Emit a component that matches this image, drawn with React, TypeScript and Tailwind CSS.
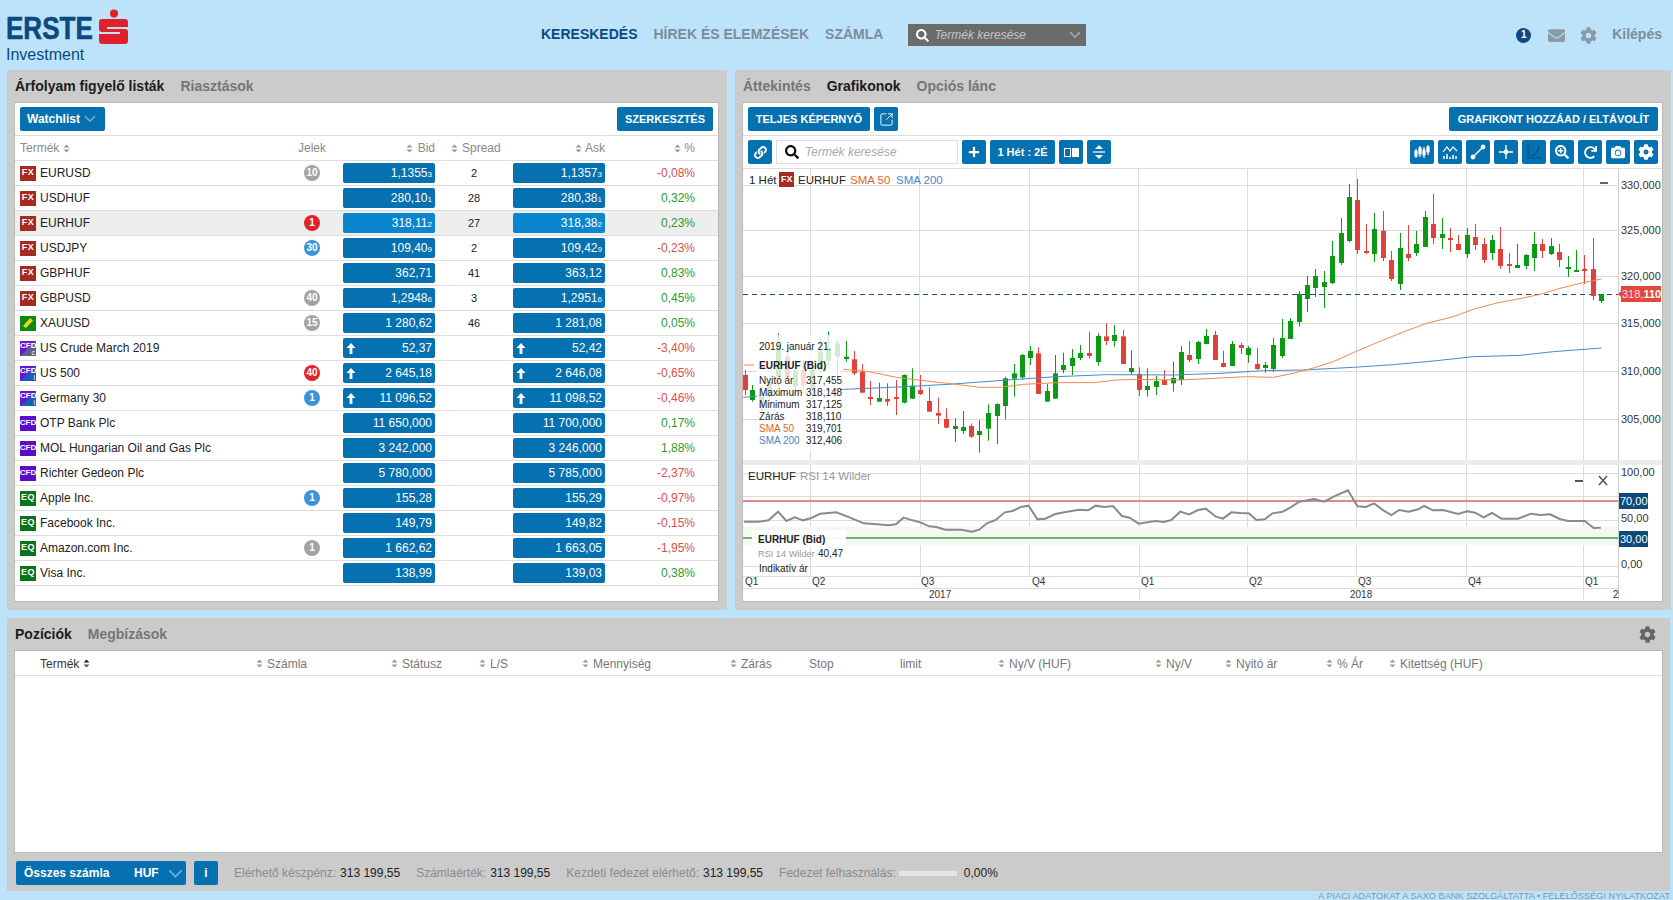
import { SquareArrowOutUpRight } from 'lucide-react'
import { FaCamera, FaCog, FaEnvelope, FaLink, FaPlus, FaRedo, FaSearch, FaSearchPlus } from 'react-icons/fa'

type Row = {
  type: 'fx' | 'gold' | 'cfdc' | 'cfdi' | 'cfd' | 'eq'
  name: string
  signal?: [string, string]
  bid: string
  bidSub?: string
  spread?: string
  ask: string
  askSub?: string
  pct: string
  arrow?: boolean
  active?: boolean
}

const GRAY = 'bg-[#a3a3a3]'
const RED = 'bg-[#e0242a]'
const BLUE = 'bg-[#3b94d9]'

const rows: Row[] = [
  { type: 'fx', name: 'EURUSD', signal: ['10', GRAY], bid: '1,1355', bidSub: '3', spread: '2', ask: '1,1357', askSub: '3', pct: '-0,08%' },
  { type: 'fx', name: 'USDHUF', bid: '280,10', bidSub: '1', spread: '28', ask: '280,38', askSub: '1', pct: '0,32%' },
  { type: 'fx', name: 'EURHUF', signal: ['1', RED], bid: '318,11', bidSub: '2', spread: '27', ask: '318,38', askSub: '2', pct: '0,23%', active: true },
  { type: 'fx', name: 'USDJPY', signal: ['30', BLUE], bid: '109,40', bidSub: '9', spread: '2', ask: '109,42', askSub: '9', pct: '-0,23%' },
  { type: 'fx', name: 'GBPHUF', bid: '362,71', spread: '41', ask: '363,12', pct: '0,83%' },
  { type: 'fx', name: 'GBPUSD', signal: ['40', GRAY], bid: '1,2948', bidSub: '6', spread: '3', ask: '1,2951', askSub: '6', pct: '0,45%' },
  { type: 'gold', name: 'XAUUSD', signal: ['15', GRAY], bid: '1 280,62', spread: '46', ask: '1 281,08', pct: '0,05%' },
  { type: 'cfdc', name: 'US Crude March 2019', bid: '52,37', ask: '52,42', pct: '-3,40%', arrow: true },
  { type: 'cfdi', name: 'US 500', signal: ['40', RED], bid: '2 645,18', ask: '2 646,08', pct: '-0,65%', arrow: true },
  { type: 'cfdi', name: 'Germany 30', signal: ['1', BLUE], bid: '11 096,52', ask: '11 098,52', pct: '-0,46%', arrow: true },
  { type: 'cfd', name: 'OTP Bank Plc', bid: '11 650,000', ask: '11 700,000', pct: '0,17%' },
  { type: 'cfd', name: 'MOL Hungarian Oil and Gas Plc', bid: '3 242,000', ask: '3 246,000', pct: '1,88%' },
  { type: 'cfd', name: 'Richter Gedeon Plc', bid: '5 780,000', ask: '5 785,000', pct: '-2,37%' },
  { type: 'eq', name: 'Apple Inc.', signal: ['1', BLUE], bid: '155,28', ask: '155,29', pct: '-0,97%' },
  { type: 'eq', name: 'Facebook Inc.', bid: '149,79', ask: '149,82', pct: '-0,15%' },
  { type: 'eq', name: 'Amazon.com Inc.', signal: ['1', GRAY], bid: '1 662,62', ask: '1 663,05', pct: '-1,95%' },
  { type: 'eq', name: 'Visa Inc.', bid: '138,99', ask: '139,03', pct: '0,38%' },
]

// x, high, low, body top, body bottom, 1 = green
// measured from the screenshot crops, converted to page coords below
const left: number[][] = [
  [14, 630, 705, 645, 690, 0], [36, 675, 725, 690, 720, 1], [317, 543, 605, 590, 597, 1], [341, 573, 645, 598, 640, 0],
  [367, 612, 700, 635, 698, 0], [391, 663, 735, 711, 717, 0], [416, 668, 725, 714, 725, 1], [442, 670, 738, 717, 725, 0],
  [467, 660, 765, 711, 717, 0], [493, 643, 730, 645, 728, 1], [517, 625, 717, 677, 716, 1], [541, 645, 705, 690, 702, 0],
  [568, 682, 755, 723, 755, 0], [593, 713, 792, 759, 767, 0], [619, 745, 805, 777, 803, 0], [644, 775, 846, 798, 807, 1],
  [670, 753, 822, 801, 813, 1], [694, 790, 834, 798, 830, 0], [718, 780, 878, 813, 825, 1], [745, 733, 842, 759, 806, 1],
  [770, 730, 852, 732, 768, 1], [796, 650, 778, 655, 738, 1], [821, 612, 710, 640, 656, 1], [845, 582, 660, 585, 652, 1],
  [871, 558, 615, 573, 594, 1], [895, 562, 702, 580, 702, 0], [922, 672, 725, 693, 725, 1], [946, 585, 716, 640, 716, 1],
  [970, 578, 640, 615, 630, 1], [997, 567, 645, 594, 618, 1], [1021, 555, 600, 579, 594, 1], [1048, 515, 595, 579, 588, 0],
  [1073, 520, 617, 528, 606, 1], [1097, 490, 555, 529, 543, 0], [1123, 495, 560, 525, 543, 1], [1148, 510, 612, 529, 612, 0],
  [1174, 572, 642, 624, 636, 1], [1198, 622, 708, 642, 690, 0], [1222, 625, 710, 678, 690, 1], [1249, 648, 705, 663, 681, 1],
  [1273, 630, 675, 660, 675, 0], [1300, 605, 695, 654, 670, 1], [1324, 558, 675, 576, 660, 1], [1348, 543, 606, 585, 600, 0],
  [1375, 543, 612, 546, 597, 1], [1399, 507, 552, 528, 552, 1], [1426, 513, 600, 525, 600, 0],
]

const faded: number[][] = [
  [62, 680, 760, 700, 745, 1], [88, 650, 740, 665, 710, 1], [114, 520, 680, 555, 650, 1], [140, 555, 660, 590, 650, 0],
  [165, 600, 700, 632, 680, 1], [190, 600, 690, 630, 675, 0], [215, 600, 720, 630, 685, 1], [240, 530, 640, 575, 630, 1],
  [265, 515, 620, 568, 602, 1], [290, 540, 655, 550, 590, 1],
]

const right: number[][] = [
  [10, 572, 622, 609, 621, 0], [35, 543, 618, 552, 618, 1], [62, 548, 582, 555, 564, 0], [85, 558, 608, 564, 585, 1],
  [112, 564, 630, 612, 627, 0], [136, 606, 638, 615, 624, 1], [160, 534, 636, 555, 627, 1], [187, 477, 594, 534, 588, 1],
  [211, 474, 537, 483, 537, 1], [238, 393, 500, 402, 486, 1], [262, 348, 456, 375, 417, 1], [286, 327, 411, 348, 384, 1],
  [313, 333, 444, 366, 381, 1], [337, 243, 372, 288, 369, 1], [364, 174, 315, 219, 309, 1], [388, 72, 247, 111, 243, 1],
  [412, 57, 282, 120, 270, 0], [439, 192, 282, 273, 279, 0], [463, 159, 306, 207, 282, 1], [490, 153, 303, 212, 294, 0],
  [514, 273, 363, 300, 357, 0], [541, 219, 390, 264, 372, 1], [565, 195, 303, 282, 294, 0], [589, 213, 288, 252, 279, 1],
  [616, 153, 261, 171, 261, 1], [640, 102, 252, 192, 234, 0], [667, 174, 267, 222, 234, 1], [691, 204, 276, 234, 240, 0],
  [715, 225, 270, 252, 270, 0], [742, 204, 294, 225, 282, 1], [766, 192, 270, 231, 255, 0], [793, 234, 309, 252, 300, 0],
  [817, 225, 300, 240, 279, 1], [841, 201, 327, 267, 318, 0], [868, 279, 339, 312, 318, 0], [892, 252, 324, 315, 324, 1],
  [919, 282, 327, 285, 318, 1], [943, 216, 333, 252, 294, 1], [967, 237, 294, 252, 273, 0], [994, 234, 285, 258, 282, 1],
  [1018, 252, 321, 276, 300, 0], [1045, 288, 351, 321, 327, 1], [1069, 270, 336, 330, 333, 1], [1093, 285, 372, 327, 330, 0],
  [1120, 234, 420, 327, 408, 0], [1144, 402, 429, 402, 423, 1],
]

const sma50 = [
  [310, 628], [380, 634], [470, 652], [560, 663], [640, 672], [720, 682], [780, 682], [850, 673], [950, 668], [1060, 668],
  [1130, 660], [1200, 658], [1320, 660], [1440, 654],
].map(([x, y]) => `${740 + x / 3},${160 + y / 3}`)
  .concat(
    [
      [80, 650], [160, 652], [220, 640], [280, 624], [340, 605], [400, 578], [480, 544], [560, 512], [620, 490], [700, 470],
      [760, 448], [830, 429], [900, 416], [960, 403], [1020, 385], [1080, 370], [1144, 357],
    ].map(([x, y]) => `${1220 + x / 3},${160 + y / 3}`),
  )
  .join(' ')

const sma200 = [
  [10, 712], [310, 688], [500, 680], [640, 672], [800, 660], [950, 650], [1100, 644], [1300, 645], [1440, 640],
].map(([x, y]) => `${740 + x / 3},${160 + y / 3}`)
  .concat(
    [
      [130, 632], [250, 630], [400, 622], [520, 614], [650, 602], [760, 590], [900, 586], [1000, 575], [1144, 564],
    ].map(([x, y]) => `${1220 + x / 3},${160 + y / 3}`),
  )
  .join(' ')

const rsi = [
  [7, 185], [30, 185], [48, 181], [64, 155], [78, 183], [92, 172], [106, 181], [120, 174], [135, 161], [162, 157], [185, 173],
  [208, 190], [230, 193], [250, 196], [262, 193], [275, 173], [290, 181], [303, 187], [318, 199], [330, 201], [345, 209],
  [372, 209], [390, 215], [402, 209], [415, 190], [430, 180], [445, 157], [458, 153], [472, 141], [485, 137], [500, 178],
  [513, 176], [530, 162], [550, 155], [570, 149], [585, 151], [598, 137], [612, 141], [627, 138], [642, 168], [655, 173],
  [670, 191], [685, 187], [698, 183], [712, 186], [725, 180], [740, 155], [755, 163], [770, 150], [783, 146], [800, 170],
  [812, 176], [826, 157], [840, 159], [855, 160], [868, 180], [882, 178], [895, 160], [912, 155], [925, 143], [940, 125],
  [965, 117], [982, 125], [998, 110], [1022, 91], [1038, 139], [1052, 141], [1066, 130], [1082, 152], [1095, 165], [1108, 150],
  [1124, 155], [1140, 148], [1150, 138], [1165, 151], [1182, 150], [1207, 162], [1222, 154], [1236, 158], [1250, 172],
  [1264, 159], [1280, 176], [1308, 176], [1330, 161], [1345, 165], [1362, 163], [1378, 177], [1392, 183], [1420, 183],
  [1435, 204], [1447, 203],
].map(([x, y]) => `${740 + x / 1.681},${460 + y / 3}`).join(' ')

const posColumns = [
  { label: 'Termék', w: 'w-[216px]', first: true },
  { label: 'Számla', w: 'w-[135px]', sort: true },
  { label: 'Státusz', w: 'w-[88px]', sort: true },
  { label: 'L/S', w: 'w-[103px]', sort: true },
  { label: 'Mennyiség', w: 'w-[148px]', sort: true },
  { label: 'Zárás', w: 'w-[79px]', sort: true },
  { label: 'Stop', w: 'w-[91px]' },
  { label: 'limit', w: 'w-[98px]' },
  { label: 'Ny/V (HUF)', w: 'w-[157px]', sort: true },
  { label: 'Ny/V', w: 'w-[70px]', sort: true },
  { label: 'Nyitó ár', w: 'w-[101px]', sort: true },
  { label: '% Ár', w: 'w-[63px]', sort: true },
  { label: 'Kitettség (HUF)', w: 'w-[120px]', sort: true },
]

const gridCols = 'grid grid-cols-[280px_24px_19px_92px_78px_92px_90px] pl-[5px] items-center'

function Sort({ dark }: { dark?: boolean }) {
  return (
    <svg width="7" height="9" viewBox="0 0 7 9" className="shrink-0">
      <path d="M3.5 0.5 L6.5 3.5 H0.5 Z" fill={dark ? '#222' : '#999'} />
      <path d="M3.5 8.5 L6.5 5.5 H0.5 Z" fill={dark ? '#555' : '#999'} />
    </svg>
  )
}

function Chev({ w, className = '' }: { w: number; className?: string }) {
  return (
    <svg width={w} height={w * 0.6} viewBox="0 0 12 7" fill="none" stroke="currentColor" strokeWidth="1.6" className={`shrink-0 ${className}`}>
      <path d="M1 1 L6 6 L11 1" />
    </svg>
  )
}

function Badge({ type }: { type: Row['type'] }) {
  if (type === 'gold') {
    return (
      <span className="w-4 h-[15px] bg-[#0b8a12] shrink-0 flex items-center justify-center">
        <svg width="12" height="12" viewBox="0 0 12 12">
          <path d="M1 9 L8 1 L11 3.5 L4 11 Z" fill="#f2d21a" />
        </svg>
      </span>
    )
  }
  if (type === 'fx') {
    return (
      <span className="w-4 h-[15px] bg-[#a52a22] shrink-0 text-white font-bold text-[9px] tracking-[0.5px] flex items-center justify-center leading-none pb-px">
        FX
      </span>
    )
  }
  if (type === 'eq') {
    return (
      <span className="w-4 h-[15px] bg-[#0a741a] shrink-0 text-white font-bold text-[9px] tracking-[0.5px] flex items-center justify-center leading-none pb-px">
        EQ
      </span>
    )
  }
  if (type === 'cfd') {
    return (
      <span className="w-4 h-[15px] bg-[#5c0bcb] shrink-0 text-white font-bold text-[8px] flex items-center justify-center leading-none pb-px">
        CFD
      </span>
    )
  }
  const bg =
    type === 'cfdc'
      ? 'bg-[linear-gradient(135deg,#6a14d2_50%,#5a6488_50%)]'
      : 'bg-[linear-gradient(135deg,#6a14d2_50%,#1a5cb8_50%)]'
  return (
    <span className={`relative w-4 h-[15px] ${bg} shrink-0 text-white font-bold text-[8px] leading-none pt-px text-center`}>
      CFD
      <span className="absolute right-px bottom-0 text-[7px] font-normal">{type === 'cfdc' ? 'c' : 'i'}</span>
    </span>
  )
}

function Price({ value, sub, arrow, active }: { value: string; sub?: string; arrow?: boolean; active?: boolean }) {
  return (
    <div
      className={`${active ? 'bg-[#0a86cf]' : 'bg-[#0671b0]'} h-5 rounded-[2px] flex items-center justify-between pl-[3px] pr-[3px] text-white text-xs`}
    >
      {arrow ? (
        <svg width="10" height="11" viewBox="0 0 10 11" fill="#fff">
          <path d="M5 0 L9.5 5 H6.4 V11 H3.6 V5 H0.5 Z" />
        </svg>
      ) : (
        <span />
      )}
      <span>
        {value}
        {sub && <span className="text-[8px]">{sub}</span>}
      </span>
    </div>
  )
}

function Btn({ children, className = '' }: { children: React.ReactNode; className?: string }) {
  return (
    <button
      className={`h-6 bg-[#0671b0] rounded-[2px] text-white font-bold flex items-center justify-center shrink-0 ${className}`}
    >
      {children}
    </button>
  )
}

function IconBtn({ children }: { children: React.ReactNode }) {
  return <Btn className="w-6 text-[14px]">{children}</Btn>
}

function Tab({ children, active }: { children: React.ReactNode; active?: boolean }) {
  return <span className={`text-sm font-bold ${active ? 'text-[#1c1c1c]' : 'text-[#767676]'}`}>{children}</span>
}

function CandleSet({ data, ox, opacity = 1 }: { data: number[][]; ox: number; opacity?: number }) {
  return (
    <g opacity={opacity}>
      {data.map(([x, h, l, t, b, g]) => {
        const cx = Math.round(ox + x / 3) + 0.5
        const color = g ? '#0a9a14' : '#e2403a'
        return (
          <g key={x}>
            <line x1={cx} x2={cx} y1={160 + h / 3} y2={160 + l / 3} stroke={color} />
            <rect x={cx - 2.5} y={160 + t / 3} width={5} height={Math.max((b - t) / 3, 2)} fill={color} />
          </g>
        )
      })}
    </g>
  )
}

function Chart() {
  const vLines = [810, 919, 1029, 1138, 1247, 1356, 1466, 1583]
  const grid = '#dcdcdc'
  const axisLabels: [string, number][] = [
    ['330,000', 185],
    ['325,000', 230],
    ['320,000', 276],
    ['315,000', 323],
    ['310,000', 371],
    ['305,000', 419],
  ]
  const legendRows: [string, string, string][] = [
    ['Nyitó ár', '317,455', '#222'],
    ['Maximum', '318,148', '#222'],
    ['Minimum', '317,125', '#222'],
    ['Zárás', '318,110', '#222'],
    ['SMA 50', '319,701', '#e0662a'],
    ['SMA 200', '312,406', '#4a86c5'],
  ]
  const quarters: [string, number][] = [
    ['Q1', 745], ['Q2', 812], ['Q3', 921], ['Q4', 1032], ['Q1', 1141], ['Q2', 1249], ['Q3', 1358], ['Q4', 1468], ['Q1', 1585],
  ]

  return (
    <svg width="919" height="432" viewBox="743 169 919 432" className="block">
      {/* grid of the price pane */}
      {vLines.map((x) => (
        <line key={x} x1={x + 0.5} x2={x + 0.5} y1={169} y2={460} stroke={grid} />
      ))}
      <line x1={1618.5} x2={1618.5} y1={169} y2={600} stroke="#cfcfcf" />
      {axisLabels.map(([label, y]) => (
        <g key={label}>
          <line x1={743} x2={1618} y1={y + 0.5} y2={y + 0.5} stroke={grid} />
          <text x={1621} y={y + 4} fontSize={11} fill="#333">
            {label}
          </text>
        </g>
      ))}
      <line x1={743} x2={1618} y1={294.5} y2={294.5} stroke="#1d4f75" strokeDasharray="5 4" />

      <CandleSet data={left} ox={740} />
      <CandleSet data={right} ox={1220} />
      <CandleSet data={faded} ox={740} />
      <polyline points={sma200} fill="none" stroke="#4a8ac4" strokeWidth={1} />
      <polyline points={sma50} fill="none" stroke="#ee8a4c" strokeWidth={1} />
      <line x1={744} x2={754} y1={365} y2={365} stroke="#ee8a4c" />

      {/* legend box on top of the candles */}
      <rect x={757} y={335} width={83} height={115} fill="#fff" opacity={0.8} />
      <text x={759} y={350} fontSize={10} fill="#222">
        2019. január 21.
      </text>
      <text x={759} y={369} fontSize={10} fontWeight={700} fill="#222">
        EURHUF (Bid)
      </text>
      {legendRows.map(([k, v, color], i) => (
        <g key={k}>
          <text x={759} y={384 + i * 12} fontSize={10} fill={color}>
            {k}
          </text>
          <text x={806} y={384 + i * 12} fontSize={10} fill="#222">
            {v}
          </text>
        </g>
      ))}

      <text x={749} y={184} fontSize={11.5} fill="#222">
        1 Hét
      </text>
      <rect x={779} y={172} width={15} height={15} fill="#a52a22" />
      <text x={781} y={182} fontSize={9} fontWeight={700} fill="#fff">
        FX
      </text>
      <text x={798} y={184} fontSize={11.5} fill="#222">
        EURHUF
      </text>
      <text x={850} y={184} fontSize={11.5} fill="#e0662a">
        SMA 50
      </text>
      <text x={896} y={184} fontSize={11.5} fill="#4a86c5">
        SMA 200
      </text>
      <rect x={1600} y={182} width={8} height={2} fill="#666" />

      {/* current price tag */}
      <path d="M1618 294 L1621 291 V286 H1661 V302 H1621 V297 Z" fill="#e2463c" />
      <text x={1622} y={298} fontSize={11} fill="#fde">
        318,
        <tspan fontWeight={700} fill="#fff">
          110
        </tspan>
      </text>

      {/* separator between the panes */}
      <rect x={743} y={460} width={919} height={5} fill="#ececec" />

      {/* RSI pane */}
      {[810, 920, 1029, 1139, 1247, 1356, 1466, 1583].map((x) => (
        <line key={x} x1={x + 0.5} x2={x + 0.5} y1={465} y2={576} stroke={grid} />
      ))}
      {[473, 496, 520, 566].map((y) => (
        <line key={y} x1={743} x2={1618} y1={y + 0.5} y2={y + 0.5} stroke={grid} />
      ))}
      <rect x={743} y={527} width={875} height={18} fill="#f2f9f2" />
      <line x1={743} x2={1618} y1={501} y2={501} stroke="#d9655e" strokeWidth={1.5} />
      <line x1={743} x2={1618} y1={538} y2={538} stroke="#459c45" strokeWidth={1.5} />
      <polyline points={rsi} fill="none" stroke="#8a8a8a" strokeWidth={2} />

      <text x={748} y={480} fontSize={11.5} fill="#222">
        EURHUF
      </text>
      <text x={800} y={480} fontSize={11.5} fill="#999">
        RSI 14 Wilder
      </text>
      <rect x={1575} y={480} width={8} height={2} fill="#555" />
      <path d="M1599 476 L1607 485 M1607 476 L1599 485" stroke="#555" strokeWidth={1.5} />

      <rect x={752} y={530} width={94} height={17} fill="#fff" opacity={0.92} />
      <text x={758} y={543} fontSize={10} fontWeight={700} fill="#222">
        EURHUF (Bid)
      </text>
      <text x={758} y={557} fontSize={9.2} fill="#999">
        RSI 14 Wilder
      </text>
      <text x={818} y={557} fontSize={10} fill="#222">
        40,47
      </text>
      <text x={759} y={572} fontSize={10} fill="#222">
        Indikatív ár
      </text>

      <text x={1621} y={476} fontSize={11} fill="#333">
        100,00
      </text>
      <rect x={1619} y={493} width={29} height={16} fill="#0d4a7a" />
      <text x={1620} y={505} fontSize={11} fill="#fff">
        70,00
      </text>
      <text x={1621} y={522} fontSize={11} fill="#333">
        50,00
      </text>
      <rect x={1619} y={531} width={29} height={16} fill="#0d4a7a" />
      <text x={1620} y={543} fontSize={11} fill="#fff">
        30,00
      </text>
      <text x={1621} y={568} fontSize={11} fill="#333">
        0,00
      </text>

      {/* time axis */}
      <line x1={743} x2={1618} y1={576.5} y2={576.5} stroke={grid} />
      <line x1={743} x2={1618} y1={588.5} y2={588.5} stroke={grid} />
      {quarters.map(([q, x], i) => (
        <text key={i} x={x} y={585} fontSize={10} fill="#333">
          {q}
        </text>
      ))}
      <line x1={1139.5} x2={1139.5} y1={589} y2={600} stroke={grid} />
      <line x1={1583.5} x2={1583.5} y1={576} y2={600} stroke={grid} />
      <text x={929} y={598} fontSize={10} fill="#333">
        2017
      </text>
      <text x={1350} y={598} fontSize={10} fill="#333">
        2018
      </text>
      <text x={1613} y={598} fontSize={10} fill="#333">
        2
      </text>
    </svg>
  )
}

function ToolIcon({ kind, dim }: { kind: string; dim?: boolean }) {
  const stroke = dim ? '#0b4f80' : '#fff'
  return (
    <svg width="16" height="16" viewBox="0 0 16 16" fill="none" stroke={stroke} strokeWidth="1.2">
      {kind === 'candles' && (
        <>
          <path d="M2 5v9M6 2v11M10 3v11M14 1v10" />
          <path d="M1 7h2v5H1zM5 4h2v6H5zM9 6h2v5H9zM13 3h2v5h-2z" fill="#fff" />
        </>
      )}
      {kind === 'bars' && (
        <>
          <path d="M1 8 L5 3 L8 7 L11 3 L15 7" strokeWidth="1.2" />
          <path d="M2 15v-3M5 15v-5M8 15v-2M11 15v-4M14 15v-3" strokeWidth="1.5" />
        </>
      )}
      {kind === 'line' && (
        <>
          <path d="M3 13 L13 3" strokeWidth="1.4" />
          <circle cx="3" cy="13" r="1.8" fill="#fff" />
          <circle cx="13" cy="3" r="1.8" fill="#fff" />
        </>
      )}
      {kind === 'cross' && (
        <>
          <path d="M8 1v14M1 8h14" strokeWidth="1.3" />
          <circle cx="8" cy="8" r="1.8" fill="#fff" />
        </>
      )}
      {kind === 'axes' && <path d="M2 1v13h13M4 12c5 0 7-3 9-10" />}
    </svg>
  )
}

function Logo() {
  return (
    <div className="w-[541px] shrink-0 pl-[6px] pt-[9px] text-[#0b4a80]">
      <div className="flex items-end h-[35px]">
        <div className="w-[87px] shrink-0 mb-px">
          <span className="inline-block origin-left scale-x-[0.84] text-[31px] font-bold leading-[27px] [-webkit-text-stroke:0.6px_#0b4a80]">
            ERSTE
          </span>
        </div>
        <svg width="29" height="35" viewBox="0 0 29 35" className="ml-[6px] shrink-0">
          <circle cx="15" cy="4.5" r="4" fill="#e2202c" />
          <path
            d="M3 10h23a3 3 0 0 1 3 3v5H8v2h18a3 3 0 0 1 3 3v9a3 3 0 0 1-3 3H3a3 3 0 0 1-3-3v-7h21v-2H3a3 3 0 0 1-3-3v-7a3 3 0 0 1 3-3z"
            fill="#e2202c"
          />
        </svg>
      </div>
      <div className="text-[16px] leading-none mt-[3px]">Investment</div>
    </div>
  )
}

export default function App() {
  return (
    <div className="w-[1673px] h-[900px] overflow-hidden bg-[#bde3fb] font-['Liberation_Sans',Arial,sans-serif] text-xs text-[#222]">
      {/* top bar */}
      <header className="h-[70px] flex items-start">
        <Logo />
        <nav className="flex items-center gap-4 h-[22px] mt-[23px] text-sm font-bold">
          <span className="text-[#0b4a80]">KERESKEDÉS</span>
          <span className="text-[#7b8d9c]">HÍREK ÉS ELEMZÉSEK</span>
          <span className="text-[#7b8d9c]">SZÁMLA</span>
        </nav>
        <div className="ml-[25px] mt-6 w-[178px] h-[22px] bg-[#6b6b6b] flex items-center pl-2 pr-[5px] text-[#c4c4c4]">
          <FaSearch className="text-white text-[13px] shrink-0" />
          <span className="ml-[5px] italic text-xs flex-1">Termék keresése</span>
          <Chev w={12} className="text-[#a8a8a8]" />
        </div>
        <div className="ml-auto mt-6 h-[22px] flex items-center pr-[11px]">
          <span className="w-[15px] h-[15px] rounded-full bg-[#0b4a80] text-white text-[10px] font-bold flex items-center justify-center">
            1
          </span>
          <FaEnvelope className="ml-[17px] text-[#8a9aa6] text-[17px]" />
          <FaCog className="ml-[15px] text-[#8a9aa6] text-[17px]" />
          <span className="ml-[15px] pb-[2px] text-sm font-bold text-[#7b8d9c]">Kilépés</span>
        </div>
      </header>

      <main className="pl-[7px]">
        <div className="flex gap-2">
          {/* watchlists */}
          <section className="w-[720px] h-[540px] bg-[#cbcbcb] pl-2 pr-[9px]">
            <div className="h-[33px] flex items-center gap-4 pb-[2px]">
              <Tab active>Árfolyam figyelő listák</Tab>
              <Tab>Riasztások</Tab>
            </div>
            <div className="h-[498px] bg-white ring-1 ring-[#b8b8b8]">
              <div className="h-[33px] border-b border-[#ddd] px-[5px] pt-1 flex justify-between">
                <Btn className="w-[85px] text-xs gap-[4px] pr-[2px]">
                  Watchlist <Chev w={12} className="text-[#6fa7cc]" />
                </Btn>
                <Btn className="w-24 text-[11px]">SZERKESZTÉS</Btn>
              </div>
              <div className={`${gridCols} h-[25px] border-b border-[#ddd] text-[#8a8a8a]`}>
                <div className="flex items-center gap-[4px]">
                  Termék <Sort />
                </div>
                <div className="flex justify-center">Jelek</div>
                <div />
                <div className="flex items-center justify-end gap-[5px]">
                  <Sort /> Bid
                </div>
                <div className="flex items-center gap-[4px] pl-[16px]">
                  <Sort /> Spread
                </div>
                <div className="flex items-center justify-end gap-[3px]">
                  <Sort /> Ask
                </div>
                <div className="flex items-center justify-end gap-[3px]">
                  <Sort /> %
                </div>
              </div>
              {rows.map((r) => (
                <div key={r.name} className={`${gridCols} h-[25px] border-b border-[#ddd] ${r.active ? 'bg-[#eeeeee]' : ''}`}>
                  <div className="flex items-center gap-1">
                    <Badge type={r.type} />
                    <span>{r.name}</span>
                  </div>
                  <div className="flex justify-center">
                    {r.signal && (
                      <span
                        className={`w-4 h-4 rounded-full ${r.signal[1]} text-white text-[10px] font-bold flex items-center justify-center leading-none`}
                      >
                        {r.signal[0]}
                      </span>
                    )}
                  </div>
                  <div />
                  <Price value={r.bid} sub={r.bidSub} arrow={r.arrow} active={r.active} />
                  <div className="text-center text-[11px]">{r.spread}</div>
                  <Price value={r.ask} sub={r.askSub} arrow={r.arrow} active={r.active} />
                  <div className={`text-right ${r.pct.startsWith('-') ? 'text-[#d9504a]' : 'text-[#2d9a2d]'}`}>{r.pct}</div>
                </div>
              ))}
            </div>
          </section>

          {/* charts */}
          <section className="w-[936px] h-[540px] bg-[#cbcbcb] pl-2 pr-[9px]">
            <div className="h-[33px] flex items-center gap-4 pb-[2px]">
              <Tab>Áttekintés</Tab>
              <Tab active>Grafikonok</Tab>
              <Tab>Opciós lánc</Tab>
            </div>
            <div className="h-[498px] bg-white ring-1 ring-[#b8b8b8]">
              <div className="h-[33px] border-b border-[#ddd] pl-[5px] pr-1 pt-1 flex gap-1">
                <Btn className="w-[122px] text-[11px]">TELJES KÉPERNYŐ</Btn>
                <IconBtn>
                  <SquareArrowOutUpRight size={15} strokeWidth={1.5} />
                </IconBtn>
                <Btn className="ml-auto w-[209px] text-[11px]">GRAFIKONT HOZZÁAD / ELTÁVOLÍT</Btn>
              </div>
              <div className="h-[33px] border-b border-[#ddd] pl-[5px] pr-1 pt-1 flex gap-1">
                <IconBtn>
                  <FaLink className="text-[13px]" />
                </IconBtn>
                <div className="w-[182px] h-6 border border-[#ddd] flex items-center pl-2 shrink-0 text-[#aaa] italic">
                  <FaSearch className="text-[#111] text-[14px] mr-[6px]" />
                  Termék keresése
                </div>
                <IconBtn>
                  <FaPlus className="text-[12px]" />
                </IconBtn>
                <Btn className="w-[65px] text-[11px]">1 Hét : 2É</Btn>
                <IconBtn>
                  <span className="w-[7px] h-[9px] border border-white" />
                  <span className="w-[7px] h-[9px] bg-white ml-px" />
                </IconBtn>
                <IconBtn>
                  <svg width="14" height="16" viewBox="0 0 14 16" fill="#fff">
                    <path d="M7 1 L11 5 H3 Z M7 15 L11 11 H3 Z" />
                    <rect x="1" y="7.4" width="12" height="1.2" />
                  </svg>
                </IconBtn>
                <div className="ml-auto flex gap-1">
                  <IconBtn>
                    <ToolIcon kind="candles" />
                  </IconBtn>
                  <IconBtn>
                    <ToolIcon kind="bars" />
                  </IconBtn>
                  <IconBtn>
                    <ToolIcon kind="line" />
                  </IconBtn>
                  <IconBtn>
                    <ToolIcon kind="cross" />
                  </IconBtn>
                  <IconBtn>
                    <ToolIcon kind="axes" dim />
                  </IconBtn>
                  <IconBtn>
                    <FaSearchPlus />
                  </IconBtn>
                  <IconBtn>
                    <FaRedo className="text-[13px]" />
                  </IconBtn>
                  <IconBtn>
                    <FaCamera />
                  </IconBtn>
                  <IconBtn>
                    <FaCog className="text-[16px]" />
                  </IconBtn>
                </div>
              </div>
              <Chart />
            </div>
          </section>
        </div>

        {/* positions */}
        <section className="w-[1663px] h-[273px] mt-2 bg-[#cbcbcb] pl-2 pr-2">
          <div className="h-[33px] flex items-center gap-4 pb-[2px]">
            <Tab active>Pozíciók</Tab>
            <Tab>Megbízások</Tab>
            <FaCog className="ml-auto mr-[6px] mt-[2px] text-[#666] text-[17px]" />
          </div>
          <div className="h-[201px] bg-white ring-1 ring-[#b8b8b8]">
            <div className="h-[25px] border-b border-[#ddd] pl-[25px] pt-px flex items-center text-[#777]">
              {posColumns.map((c) => (
                <div key={c.label} className={`${c.w} shrink-0 flex items-center gap-1 ${c.first ? 'text-[#333]' : ''}`}>
                  {c.sort && <Sort />}
                  {c.label}
                  {c.first && <Sort dark />}
                </div>
              ))}
            </div>
          </div>
          <div className="flex items-center pt-[9px] pl-px">
            <Btn className="w-[170px] text-xs pl-2 pr-1">
              <span>Összes számla</span>
              <span className="ml-auto w-[25px] text-left">HUF</span>
              <Chev w={15} className="ml-[9px] mr-[-1px] text-[#6fa7cc]" />
            </Btn>
            <Btn className="w-6 ml-2 text-xs">i</Btn>
            <span className="ml-4 text-[#8a8a8a]">Elérhető készpénz:</span>
            <span className="ml-1">313 199,55</span>
            <span className="ml-4 text-[#8a8a8a]">Számlaérték:</span>
            <span className="ml-1">313 199,55</span>
            <span className="ml-4 text-[#8a8a8a]">Kezdeti fedezet elérhető:</span>
            <span className="ml-1">313 199,55</span>
            <span className="ml-4 text-[#8a8a8a]">Fedezet felhasználás:</span>
            <span className="ml-[3px] w-[58px] h-[5px] bg-[#e6e6e6]" />
            <span className="ml-[7px]">0,00%</span>
          </div>
        </section>
      </main>

      <div className="pr-[3px] text-right text-[9.2px] leading-[11px] text-[#7d97ab]">
        A PIACI ADATOKAT A SAXO BANK SZOLGÁLTATTA • FELELŐSSÉGI NYILATKOZAT
      </div>
    </div>
  )
}
